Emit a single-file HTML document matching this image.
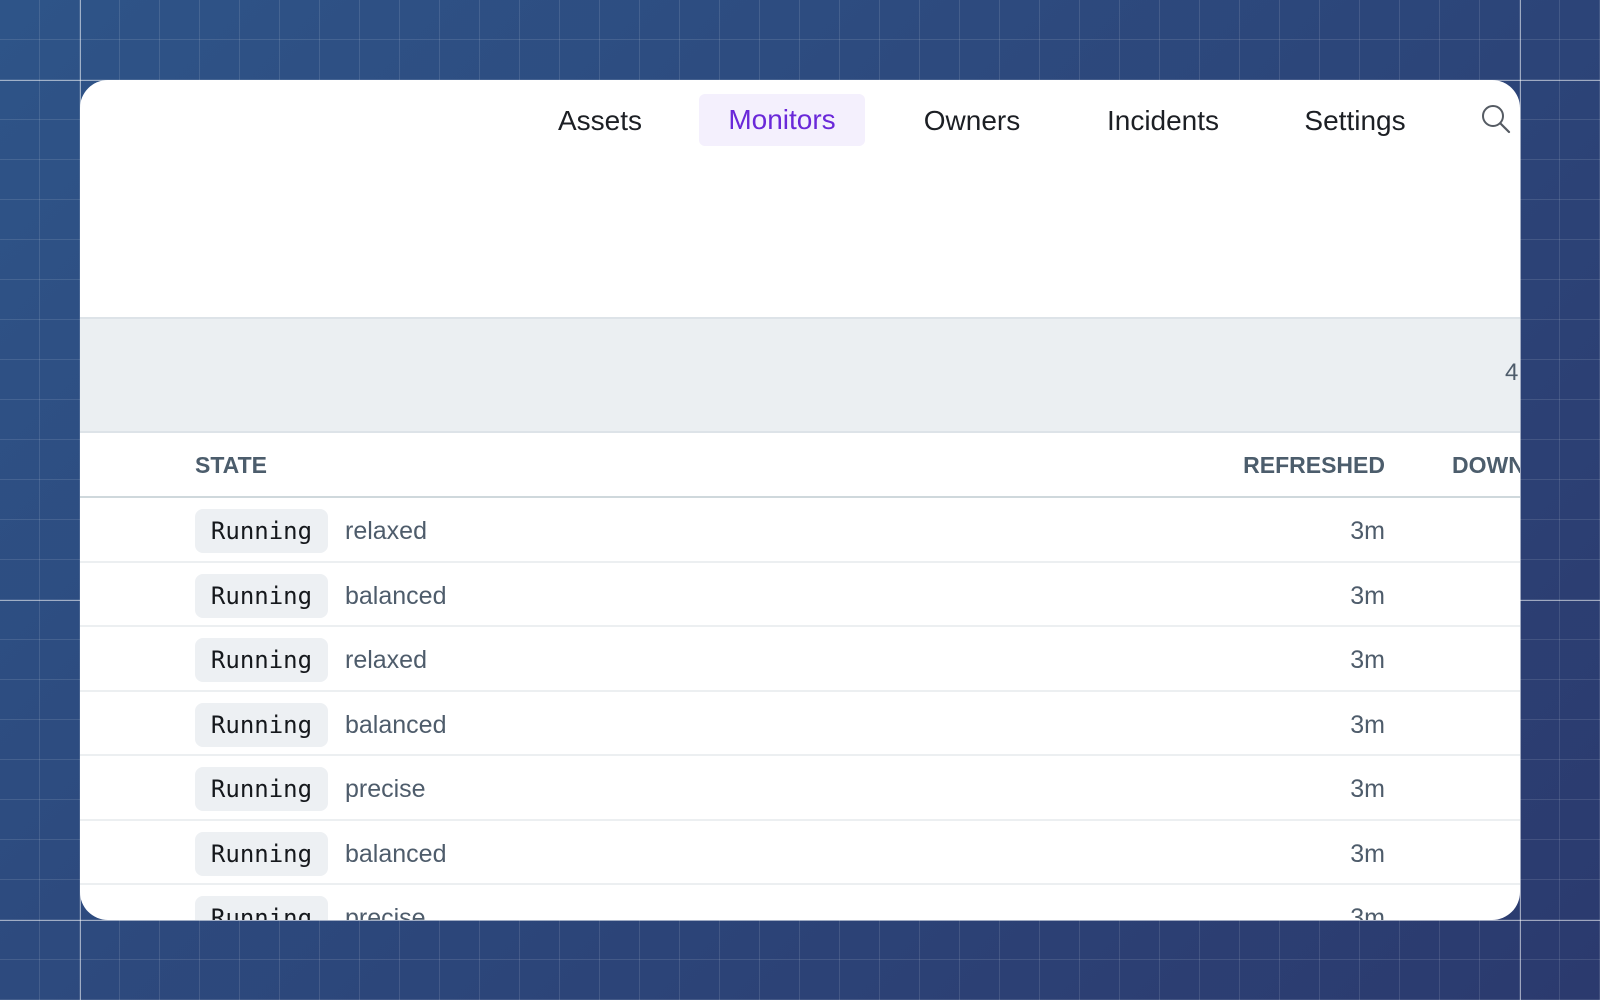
<!DOCTYPE html>
<html><head><style>
*{margin:0;padding:0;box-sizing:border-box}
body{width:1600px;height:1000px;overflow:hidden;position:relative;font-family:"Liberation Sans",sans-serif;
background:
linear-gradient(rgba(255,255,255,.11) 1px,transparent 1px) 0 -1px/40px 40px,
linear-gradient(90deg,rgba(255,255,255,.11) 1px,transparent 1px) -1px 0/40px 40px,
linear-gradient(135deg,#2e5488,#2b3a6e);}
.hl{position:absolute;background:rgba(255,255,255,.55)}
.card{position:absolute;left:80px;top:80px;width:1440px;height:840px;background:#fff;border-radius:28px;overflow:hidden}
.nav{position:absolute;top:15px;height:52px;line-height:52px;font-size:28px;color:#1c1f24;transform:translateX(-50%);padding:0 24px;border-radius:6px;white-space:nowrap}
.nav.act{background:#f4f0fd;color:#6a28d9;top:14px}
.band{position:absolute;left:0;top:237px;width:1440px;height:116px;background:#ebeff2;border-top:2px solid #dde3e8;border-bottom:2px solid #dde3e8}
.th{position:absolute;top:372px;font-size:23px;font-weight:bold;color:#4c5d6c}
.hline{position:absolute;left:0;top:416px;width:1440px;height:2px;background:#cfd8dc}
.row{position:absolute;left:0;width:1440px;height:64.5px;border-bottom:2px solid #eceff1}
.badge{position:absolute;left:115px;top:11px;width:133px;height:44px;background:#edf0f3;border-radius:8px;font-family:"DejaVu Sans Mono",monospace;font-size:24px;line-height:44px;text-align:center;color:#15181c}
.lbl{position:absolute;left:265px;top:0;line-height:66px;font-size:25px;color:#4e5c6b}
.t{position:absolute;right:135px;top:0;line-height:66px;font-size:25px;color:#4e5c6b}
</style></head><body>
<div class="hl" style="left:0;top:80px;width:1600px;height:1px"></div>
<div class="hl" style="left:0;top:600px;width:1600px;height:1px"></div>
<div class="hl" style="left:0;top:920px;width:1600px;height:1px"></div>
<div class="hl" style="left:80px;top:0;width:1px;height:1000px"></div>
<div class="hl" style="left:1520px;top:0;width:1px;height:1000px"></div>
<div class="card">
<div class="nav" style="left:520px">Assets</div>
<div class="nav act" style="left:702px;width:166px;text-align:center">Monitors</div>
<div class="nav" style="left:892px">Owners</div>
<div class="nav" style="left:1083px">Incidents</div>
<div class="nav" style="left:1275px">Settings</div>
<svg style="position:absolute;left:1401px;top:24px" width="30" height="30" viewBox="0 0 30 30"><circle cx="12" cy="12" r="10" fill="none" stroke="#555b63" stroke-width="2"/><line x1="19.5" y1="19.5" x2="28" y2="28" stroke="#555b63" stroke-width="2.2" stroke-linecap="round"/></svg>
<div class="band"><div style="position:absolute;left:1425px;top:40px;font-size:24px;color:#4e5c6b">4</div></div>
<div class="th" style="left:115px">STATE</div>
<div class="th" style="right:135px">REFRESHED</div>
<div class="th" style="left:1372px">DOWN</div>
<div class="hline"></div>
<div class="row" style="top:418px"><div class="badge">Running</div><div class="lbl">relaxed</div><div class="t">3m</div></div>
<div class="row" style="top:482.5px"><div class="badge">Running</div><div class="lbl">balanced</div><div class="t">3m</div></div>
<div class="row" style="top:547px"><div class="badge">Running</div><div class="lbl">relaxed</div><div class="t">3m</div></div>
<div class="row" style="top:611.5px"><div class="badge">Running</div><div class="lbl">balanced</div><div class="t">3m</div></div>
<div class="row" style="top:676px"><div class="badge">Running</div><div class="lbl">precise</div><div class="t">3m</div></div>
<div class="row" style="top:740.5px"><div class="badge">Running</div><div class="lbl">balanced</div><div class="t">3m</div></div>
<div class="row" style="top:805px"><div class="badge">Running</div><div class="lbl">precise</div><div class="t">3m</div></div>
</div>
</body></html>
